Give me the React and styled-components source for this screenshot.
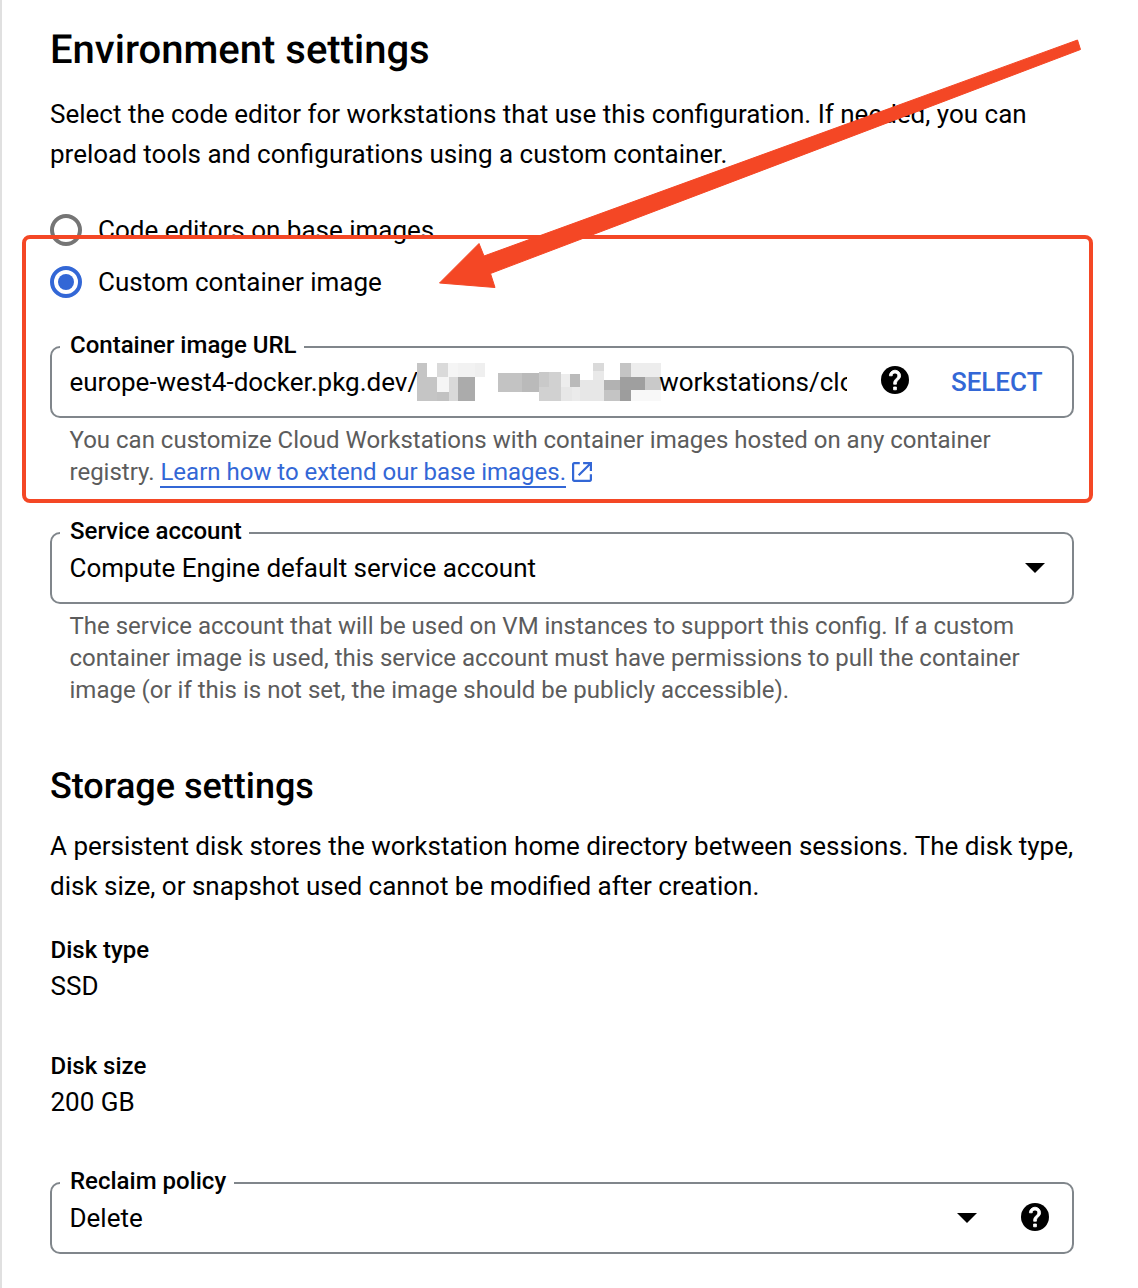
import React from "react";
import styled, { createGlobalStyle } from "styled-components";

const GlobalStyle = createGlobalStyle`
  *, *::before, *::after { box-sizing: border-box; }
  body { margin: 0; background: #fff; }
`;

const Page = styled.main`
  position: relative;
  height: 1288px;
  overflow: hidden;
  border-left: 2px solid #e0e0e0;
  padding: 20px 64px 0 48px;
  font-family: Roboto, "Liberation Sans", sans-serif;
  font-size: 26px;
  line-height: 40px;
  color: #000;
`;

const Section = styled.section`
  display: flex;
  flex-direction: column;
  margin-top: ${({ $top }) => $top}px;
`;

const Heading = styled.h2`
  margin: 0 0 ${({ $bottom }) => $bottom}px;
  font-size: ${({ $size }) => $size}px;
  line-height: 60px;
  font-weight: 500;
  text-rendering: geometricPrecision;
`;

const Intro = styled.p`
  margin: 0;
  white-space: nowrap;
`;

const RadioGroup = styled.div`
  display: flex;
  flex-direction: column;
  gap: 12px;
  margin-top: 36px;
`;

const RadioLabel = styled.label`
  display: flex;
  align-items: center;
  gap: 16px;
  white-space: nowrap;
`;

const RadioRing = styled.span`
  display: grid;
  place-items: center;
  width: 32px;
  height: 32px;
  border: 4px solid ${({ $checked }) => ($checked ? "#3367d6" : "#757575")};
  border-radius: 50%;

  &::after {
    content: "";
    width: 16px;
    height: 16px;
    border-radius: 50%;
    background: ${({ $checked }) => ($checked ? "#3367d6" : "transparent")};
  }
`;

const Field = styled.fieldset`
  min-width: 0;
  height: 86px;
  margin: ${({ $top }) => $top}px 0 0;
  padding: 0;
  border: 2px solid #80868b;
  border-radius: 10px;
`;

const FieldLabel = styled.legend`
  height: 30px;
  margin-left: 8px;
  padding: 0 7.5px 0 10px;
  font-size: 24px;
  line-height: 26px;
  font-weight: 500;
`;

const FieldBody = styled.div`
  display: flex;
  align-items: center;
  height: 40px;
  padding: 0 ${({ $right }) => $right}px 0 17.5px;
  white-space: nowrap;
`;

const UrlValue = styled.div`
  display: flex;
  align-items: center;
  flex: none;
  width: 777.5px;
  overflow: hidden;
`;

const Redaction = styled.svg`
  flex: none;
  width: 244px;
  height: 38px;
  margin-left: -1px;
  margin-right: -2px;
`;

const Value = styled.span`
  flex: 1;
`;

const Action = styled.button`
  margin-left: auto;
  padding: 0;
  border: 0;
  background: none;
  color: #3367d6;
  font: 500 26px/40px Roboto, "Liberation Sans", sans-serif;
`;

const Icon = styled.svg`
  flex: none;
  display: block;
  width: ${({ $w }) => $w}px;
  height: ${({ $h }) => $h}px;
  margin-left: ${({ $left }) => $left || 0}px;
  margin-right: ${({ $right }) => $right || 0}px;
  margin-bottom: ${({ $lift }) => $lift || 0}px;
`;

const Helper = styled.p`
  margin: 6px 0 0 19.5px;
  font-size: 24px;
  line-height: 32px;
  color: #5c5c5c;
  white-space: nowrap;
`;

const Link = styled.a`
  display: inline-block;
  height: 32px;
  border-bottom: 2px solid #3367d6;
  color: #3367d6;
`;

const LinkIcon = styled.svg`
  width: 20px;
  height: 20px;
  margin-left: 6px;
  vertical-align: -2px;
`;

const Detail = styled.dl`
  margin: ${({ $top }) => $top}px 0 0 0.5px;
  line-height: 36px;
`;

const DetailName = styled.dt`
  font-size: 24px;
  font-weight: 500;
`;

const DetailValue = styled.dd`
  margin: 0;
`;

const Highlight = styled.div`
  position: absolute;
  left: 20px;
  top: 235px;
  width: 1071px;
  height: 268px;
  border: 4px solid #f44725;
  border-radius: 8px;
`;

const Arrow = styled.svg`
  position: absolute;
  left: 436px;
  top: 36px;
  width: 648px;
  height: 256px;
`;

const HelpIcon = (props) => (
  <Icon viewBox="2 2 20 20" $w={28} $h={28} {...props}>
    <circle cx="12" cy="12" r="10" />
    <path
      fill="#fff"
      stroke="#fff"
      strokeWidth="0.6"
      d="M13 19h-2v-2h2zM15.07 11.25l-.9.92C13.45 12.9 13 13.5 13 15h-2v-.5c0-1.1.45-2.1 1.17-2.83l1.24-1.26c.37-.36.59-.86.59-1.41 0-1.1-.9-2-2-2s-2 .9-2 2H8c0-2.21 1.79-4 4-4s4 1.79 4 4c0 .88-.36 1.68-.93 2.25z"
    />
  </Icon>
);

const DropdownIcon = (props) => (
  <Icon viewBox="0 0 20 10" $w={20} $h={10} {...props}>
    <path d="M0 0h20L10 10z" />
  </Icon>
);

const blocks = [
  [0, 0, 10, 38, "#c5c5c5"],
  [10, 14, 10, 24, "#c5c5c5"],
  [20, 0, 11, 14, "#dadada"],
  [31, 0, 10, 14, "#f5f5f5"],
  [41, 0, 17, 14, "#f2f2f2"],
  [58, 0, 10, 14, "#efefef"],
  [20, 14, 12, 15, "#f5f5f5"],
  [20, 29, 12, 9, "#c2c2c2"],
  [32, 14, 9, 24, "#d9d9d9"],
  [41, 14, 17, 24, "#ababab"],
  [81, 10, 24, 19, "#c3c3c3"],
  [105, 10, 17, 19, "#bababa"],
  [122, 9, 10, 15, "#c9c9c9"],
  [132, 9, 12, 15, "#d1d1d1"],
  [122, 24, 22, 14, "#d1d1d1"],
  [144, 11, 9, 13, "#ededed"],
  [153, 11, 10, 13, "#bababa"],
  [144, 24, 11, 14, "#e7e7e7"],
  [155, 24, 8, 14, "#ebebeb"],
  [163, 17, 24, 21, "#e7e7e7"],
  [176, 0, 11, 8, "#dadada"],
  [176, 8, 11, 9, "#e9e9e9"],
  [187, 17, 16, 10, "#b2b2b2"],
  [187, 27, 16, 11, "#c4c4c4"],
  [203, 0, 11, 14, "#c4c4c4"],
  [214, 0, 30, 14, "#ededed"],
  [203, 14, 25, 13, "#9f9f9f"],
  [228, 14, 16, 13, "#c9c9c9"],
  [203, 27, 11, 11, "#9d9d9d"],
  [214, 27, 30, 11, "#f8f8f8"],
];

export default function App() {
  return (
    <Page>
      <GlobalStyle />
      <Section $top={0}>
        <Heading $size={40} $bottom={14}>Environment settings</Heading>
        <Intro>
          Select the code editor for workstations that use this configuration. If needed, you can
          <br />
          preload tools and configurations using a custom container.
        </Intro>
        <RadioGroup>
          <RadioLabel>
            <RadioRing />
            Code editors on base images
          </RadioLabel>
          <RadioLabel>
            <RadioRing $checked />
            Custom container image
          </RadioLabel>
        </RadioGroup>
        <Field $top={30}>
          <FieldLabel>Container image URL</FieldLabel>
          <FieldBody $right={29.5}>
            <UrlValue>
              europe-west4-docker.pkg.dev/
              <Redaction viewBox="0 0 244 38" shapeRendering="crispEdges">
                {blocks.map(([x, y, width, height, fill], i) => (
                  <rect key={i} x={x} y={y} width={width} height={height} fill={fill} />
                ))}
              </Redaction>
              workstations/clo
            </UrlValue>
            <HelpIcon $left={34} $lift={4} />
            <Action>SELECT</Action>
          </FieldBody>
        </Field>
        <Helper>
          You can customize Cloud Workstations with container images hosted on any container
          <br />
          registry. <Link>Learn how to extend our base images.</Link>
          <LinkIcon viewBox="3 3 18 18" fill="#3367d6">
            <path d="M5 21q-.825 0-1.412-.587T3 19V5q0-.825.588-1.412T5 3h5v2H5v14h14v-5h2v5q0 .825-.587 1.413T19 21H5Zm4.7-5.3l-1.4-1.4L17.6 5H13V3h8v8h-2V6.4l-9.3 9.3Z" />
          </LinkIcon>
        </Helper>
        <Field $top={30}>
          <FieldLabel>Service account</FieldLabel>
          <FieldBody $right={27}>
            <Value>Compute Engine default service account</Value>
            <DropdownIcon />
          </FieldBody>
        </Field>
        <Helper>
          The service account that will be used on VM instances to support this config. If a custom
          <br />
          container image is used, this service account must have permissions to pull the container
          <br />
          image (or if this is not set, the image should be publicly accessible).
        </Helper>
      </Section>
      <Section $top={50}>
        <Heading $size={36} $bottom={10}>Storage settings</Heading>
        <Intro>
          A persistent disk stores the workstation home directory between sessions. The disk type,
          <br />
          disk size, or snapshot used cannot be modified after creation.
        </Intro>
        <Detail $top={26}>
          <DetailName>Disk type</DetailName>
          <DetailValue>SSD</DetailValue>
        </Detail>
        <Detail $top={44}>
          <DetailName>Disk size</DetailName>
          <DetailValue>200 GB</DetailValue>
        </Detail>
        <Field $top={48}>
          <FieldLabel>Reclaim policy</FieldLabel>
          <FieldBody $right={23}>
            <Value>Delete</Value>
            <DropdownIcon $right={44} />
            <HelpIcon $lift={2} />
          </FieldBody>
        </Field>
      </Section>
      <Highlight />
      <Arrow viewBox="438 36 648 256" fill="#f44725">
        <path
          d="M1077.500 40L1080.500 49.500L490.500 273.500L495 287.500L439.500 283L479 243.500L484 256Z"
          stroke="#f44725"
          strokeWidth="1"
          strokeLinejoin="round"
        />
      </Arrow>
    </Page>
  );
}
